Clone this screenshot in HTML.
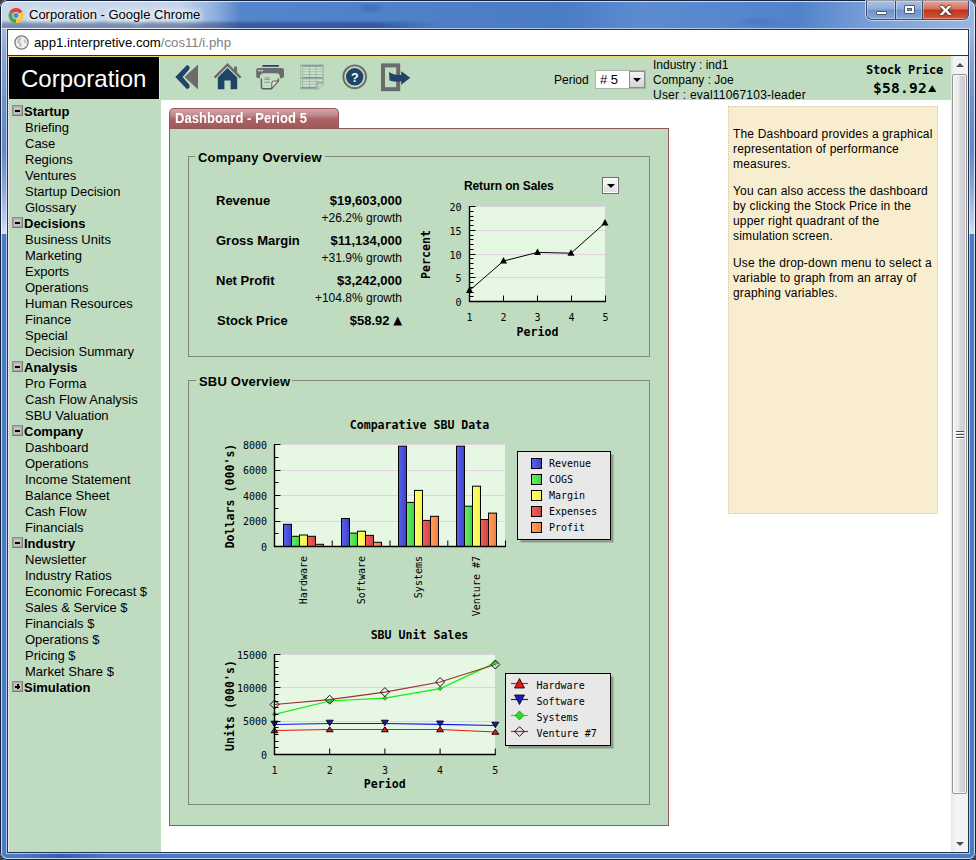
<!DOCTYPE html>
<html>
<head>
<meta charset="utf-8">
<title>Corporation</title>
<style>
html,body{margin:0;padding:0;}
body{width:976px;height:860px;overflow:hidden;position:relative;background:#3a3d42;font-family:"Liberation Sans",sans-serif;font-size:13px;color:#000;}
.abs{position:absolute;}
#frame{left:0;top:0;width:976px;height:860px;overflow:hidden;border-radius:7px;background:linear-gradient(to right,rgba(47,92,180,0) 20px,rgba(47,92,180,.9) 60px,rgba(47,92,180,0) 110px) 0 852px/976px 8px no-repeat,linear-gradient(to bottom,#a2b8de 30px,#86a3d4 60px,#6c90cc 105px,#6288c8 150px,#8caadb 190px,#c2d5f0 226px,#d2e1f6 234px,#4a7cc5 234px,#4a7cc5 100%);}
#titlebar{left:0;top:0;width:976px;height:29px;background:linear-gradient(to right,#c9d8ec 0px,#c4d4ea 180px,#8fb0de 215px,#5585cb 240px,#4f80c8 400px,#4a7bc5 560px,#5c8bd0 640px,#5283ca 800px,#7a9fd8 870px,#9ab6e2 976px);}
#titleshade{left:0;top:20px;width:440px;height:9px;background:linear-gradient(to bottom,rgba(10,30,90,0) 0,rgba(10,30,90,.38) 4px,rgba(10,30,90,.42) 8px,rgba(255,255,255,.3) 8px);-webkit-mask-image:linear-gradient(to right,#000 0,#000 85%,transparent 100%);mask-image:linear-gradient(to right,#000 0,#000 85%,transparent 100%);}
#titletext{left:29px;top:7px;font-size:13px;line-height:16px;color:#000;white-space:nowrap;text-shadow:0 0 6px #fff,0 0 6px #fff,0 0 10px #fff;}
#addr{left:8px;top:30px;width:960px;height:25px;background:#fff;border-bottom:1px solid #26344f;box-sizing:content-box;}
#addrtext{left:34px;top:35px;font-size:13.2px;line-height:16px;white-space:nowrap;color:#000;}
#addrtext span{color:#808080;}
#page{left:8px;top:56px;width:943px;height:796px;background:#fff;overflow:hidden;}
#vscroll{left:951px;top:56px;width:17px;height:796px;background:#f0f0f0;}

#ydot-top{left:8px;top:56px;width:943px;height:0;border-top:1px solid #ecd973;}
#ydot-left{left:8px;top:56px;width:0;height:796px;border-left:1px dotted #efd470;}
#logo{left:9px;top:57px;width:150px;height:42px;background:#000;color:#fff;font-size:24px;line-height:42px;white-space:nowrap;}
#logo span{position:absolute;left:12px;top:1px;}
#toolbar{left:159px;top:57px;width:791px;height:42px;background:#c0dcc0;border-left:1px solid #d9ead9;border-bottom:1px solid #ecd973;box-sizing:content-box;}
#sidebar{left:9px;top:99px;width:152px;height:753px;border-top:1px solid #ecd973;background:#c0dcc0;border-right:1px dotted #efd470;box-sizing:border-box;padding-top:4px;font-size:13px;line-height:16px;white-space:nowrap;}
.sh{font-weight:bold;padding-left:15px;position:relative;height:16px;}
.si{padding-left:16px;height:16px;}
.pm{position:absolute;left:3px;top:1px;width:11px;height:11px;box-sizing:border-box;border:1px solid #8e8e8e;border-right-color:#7a7a7a;border-bottom-color:#7a7a7a;background:#c2c2c2;box-shadow:inset 0 0 1px 1px #a4a4a4;}
.pm:before{content:"";position:absolute;left:2px;top:3.5px;width:5px;height:2px;background:#000;}
.pm.plus:after{content:"";position:absolute;left:3.5px;top:2px;width:2px;height:5px;background:#000;}

.tb12{font-size:12px;line-height:15px;white-space:nowrap;}
#psel{left:595px;top:70px;width:51px;height:19px;box-sizing:border-box;background:#fff;border:1px solid #a8b4a8;font-size:13px;line-height:17px;}
#psel span{position:absolute;left:4px;top:0;}
#psel i{position:absolute;right:0;top:0;width:16px;height:17px;background:linear-gradient(#f4f4f4,#d4d4d4);border:1px solid #8c8c8c;box-sizing:border-box;}
#psel i:after{content:"";position:absolute;left:3px;top:6px;border:4px solid transparent;border-top:4px solid #000;border-bottom:none;}
.mono{font-family:"DejaVu Sans Mono","Liberation Mono",monospace;white-space:nowrap;}
#sp1{left:866px;top:62.5px;font-weight:bold;font-size:12px;letter-spacing:-0.22px;line-height:15px;}
#sp2{left:873px;top:79.5px;font-weight:bold;font-size:14.5px;letter-spacing:0.27px;line-height:17px;}
#sp2 span{font-size:11px;letter-spacing:0;margin-left:1px;display:inline-block;transform:scaleY(.8);transform-origin:50% 78%;position:relative;top:-2px;font-family:"DejaVu Sans",sans-serif;}
/*MAINCSS*/
#tab{left:169px;top:108px;width:170px;height:21px;box-sizing:border-box;border:1px solid #9c5456;border-bottom:none;border-radius:5px 5px 0 0;background:linear-gradient(#d0a9aa 0%,#c08a8b 30%,#aa6466 50%,#a15658 100%);color:#fff;font-weight:bold;font-size:13px;line-height:19px;white-space:nowrap;}
#tab span{position:absolute;left:5px;top:-0.5px;letter-spacing:.06px;font-size:13px;transform:scaleY(1.06);transform-origin:50% 60%;}
#panel{left:169px;top:128px;width:500px;height:698px;box-sizing:border-box;border:1px solid #94585a;background:#c0dcc0;}
.fs{box-sizing:border-box;border:1px solid #7f857f;}
.lg{background:#c0dcc0;font-weight:bold;font-size:13px;line-height:16px;padding-left:3px;box-sizing:border-box;white-space:nowrap;letter-spacing:.2px;}
.kl{font-weight:bold;font-size:13px;line-height:16px;white-space:nowrap;}
.kv{font-weight:bold;font-size:13px;line-height:16px;white-space:nowrap;right:574px;text-align:right;}
.kg{font-size:12px;line-height:15px;white-space:nowrap;right:574px;text-align:right;}
#rostitle{left:464px;top:179px;font-weight:bold;font-size:12px;line-height:15px;white-space:nowrap;letter-spacing:-.12px;}
#rosbtn{left:602px;top:177px;width:17px;height:17px;box-sizing:border-box;border:1px solid #6e6e6e;background:linear-gradient(#fbfbfb,#dcdcdc);box-shadow:inset 0 0 0 1px #fff;}
#rosbtn:after{content:"";position:absolute;left:4px;top:6px;border:4px solid transparent;border-top:4px solid #000;border-bottom:none;}
/*ENDMAINCSS*/
#help{left:728px;top:106px;width:210px;height:408px;box-sizing:border-box;border:1px dotted #eec95a;background:#f8edcf;font-size:12px;line-height:15px;padding:8px 0 0 4px;letter-spacing:.18px;white-space:nowrap;}
#help p{margin:12px 0 12px 0;}
#vscroll{background:linear-gradient(to right,#e6e6e6,#f4f4f4 4px,#f2f2f2);}
#sb-up,#sb-down{left:951px;width:17px;height:17px;}
#sb-up{top:57px;}#sb-down{top:835px;}
#sb-up i,#sb-down i{position:absolute;left:5px;width:0;height:0;border:4px solid transparent;}
#sb-up i{top:2px;border-bottom:4px solid #505050;border-top:none;top:6px;}
#sb-down i{top:7px;border-top:4px solid #505050;border-bottom:none;}
#sb-thumb{left:952px;top:74px;width:15px;height:720px;box-sizing:border-box;border:1px solid #979797;border-radius:2px;background:linear-gradient(to right,#f4f4f4 0,#e9e9ea 45%,#d6d6da 55%,#cbcbd0 100%);box-shadow:inset 0 0 0 1px rgba(255,255,255,.7);}
#sb-thumb i{position:absolute;left:3px;top:356px;width:8px;height:1px;background:#4a4a4a;box-shadow:0 1px 0 #fff,0 3px 0 #4a4a4a,0 4px 0 #fff,0 6px 0 #4a4a4a,0 7px 0 #fff;}
#wbtns{left:866px;top:1px;width:103px;height:19px;border:1px solid #3c4c6c;border-top:none;border-radius:0 0 6px 6px;box-sizing:border-box;box-shadow:0 0 0 1px rgba(255,255,255,.55);overflow:hidden;}
.wb{top:0;height:18px;background:linear-gradient(#a9c0e2 0,#8eabd8 45%,#6e92cb 50%,#86a6d8 100%);border-right:1px solid #3c4c6c;box-sizing:border-box;box-shadow:inset 0 0 0 1px rgba(255,255,255,.35);}
.wb i{position:absolute;}
#wclose{background:linear-gradient(#e8a394 0,#d5705c 45%,#c0341c 50%,#cf5a3c 100%);border-right:none;color:#fff;font-weight:bold;text-align:center;font-size:17px;line-height:15px;text-shadow:0 0 1px #3a2020,0 0 1px #3a2020,0 0 2px #3a2020;}
#wclose span{position:relative;top:1px;left:-0.5px;display:inline-block;transform:scaleX(1.35);}
#ring{left:0;top:0;width:976px;height:860px;border-radius:7px;box-shadow:inset 0 0 0 1px #16213a,inset 0 0 0 2px rgba(255,255,255,.72);pointer-events:none;}
#inner{left:8px;top:30px;width:960px;height:822px;box-shadow:0 0 0 1px #26344f,0 0 0 2px rgba(255,255,255,.55);}
#titleblob1{left:355px;top:2px;width:30px;height:12px;background:radial-gradient(ellipse at center,rgba(20,50,120,.25),rgba(20,50,120,0) 70%);}
#titleblob2{left:730px;top:16px;width:60px;height:12px;background:radial-gradient(ellipse at center,rgba(20,50,140,.16),rgba(20,50,140,0) 70%);}
</style>
</head>
<body>
<div id="frame" class="abs">
<div id="titlebar" class="abs"></div>
<div id="titleshade" class="abs"></div>
<div id="titleblob1" class="abs"></div><div id="titleblob2" class="abs"></div>
<div id="titletext" class="abs">Corporation - Google Chrome</div>
<div id="inner" class="abs"></div>
<div id="addr" class="abs"></div>
<div id="addrtext" class="abs">app1.interpretive.com<span>/cos11/i.php</span></div>
<div id="page" class="abs">

</div>

<div class="abs" id="ydot-top"></div>
<div class="abs" id="ydot-left"></div>
<div class="abs" id="logo"><span>Corporation</span></div>
<div class="abs" id="toolbar"></div>
<div class="abs" id="sidebar">
<div class="sh"><i class="pm"></i>Startup</div>
<div class="si">Briefing</div>
<div class="si">Case</div>
<div class="si">Regions</div>
<div class="si">Ventures</div>
<div class="si">Startup Decision</div>
<div class="si">Glossary</div>
<div class="sh"><i class="pm"></i>Decisions</div>
<div class="si">Business Units</div>
<div class="si">Marketing</div>
<div class="si">Exports</div>
<div class="si">Operations</div>
<div class="si">Human Resources</div>
<div class="si">Finance</div>
<div class="si">Special</div>
<div class="si">Decision Summary</div>
<div class="sh"><i class="pm"></i>Analysis</div>
<div class="si">Pro Forma</div>
<div class="si">Cash Flow Analysis</div>
<div class="si">SBU Valuation</div>
<div class="sh"><i class="pm"></i>Company</div>
<div class="si">Dashboard</div>
<div class="si">Operations</div>
<div class="si">Income Statement</div>
<div class="si">Balance Sheet</div>
<div class="si">Cash Flow</div>
<div class="si">Financials</div>
<div class="sh"><i class="pm"></i>Industry</div>
<div class="si">Newsletter</div>
<div class="si">Industry Ratios</div>
<div class="si">Economic Forecast $</div>
<div class="si">Sales &amp; Service $</div>
<div class="si">Financials $</div>
<div class="si">Operations $</div>
<div class="si">Pricing $</div>
<div class="si">Market Share $</div>
<div class="sh"><i class="pm plus"></i>Simulation</div>
</div>

<svg class="abs" id="icons" style="left:165px;top:57px" width="255" height="42" viewBox="165 57 255 42">
 <!-- back -->
 <polygon points="198,64.5 198,89.5 184.5,77" fill="#6b6b6b"/>
 <polygon points="187,65 189.5,66.5 189.5,69 182.6,77 189.5,85 189.5,87.8 187,89.3 175.3,77" fill="#1f4468"/>
 <!-- home -->
 <polygon points="227.5,68 237.2,77.4 237.2,89.2 230.6,89.2 230.6,80.6 224.4,80.6 224.4,89.2 217.8,89.2 217.8,77.4" fill="#1f4468"/>
 <polyline points="214.6,77.6 227.5,64.6 240.6,77.6" fill="none" stroke="#6b6b6b" stroke-width="2.4" stroke-linejoin="miter"/>
 <rect x="234" y="66.6" width="3" height="6" fill="#6b6b6b"/>
 <!-- print -->
 <rect x="262.200" y="65.100" width="16.800" height="1.700" rx="0.800" fill="#1f4468"/>
 <path d="M258.600,67.900 h23 a2.400,2.400 0 0 1 2.400,2.400 v5.600 a2.400,2.400 0 0 1 -2.400,2.400 h-23 a2.400,2.400 0 0 1 -2.400,-2.400 v-5.600 a2.400,2.400 0 0 1 2.400,-2.400 z" fill="#6b6b6b"/>
 <rect x="258.400" y="69.900" width="1.700" height="1.500" fill="#dfe9df"/><rect x="261.100" y="69.900" width="1.700" height="1.500" fill="#dfe9df"/>
 <path d="M263.400,74.700 h13 a2,2 0 0 1 2,2 v4.300 l-7,7.700 h-8 a2,2 0 0 1 -2,-2 v-10 a2,2 0 0 1 2,-2 z" fill="#c8ddc8" stroke="#c0dcc0" stroke-width="3"/>
 <path d="M263.400,74.700 h13 a2,2 0 0 1 2,2 v4.300 l-7,7.700 h-8 a2,2 0 0 1 -2,-2 v-10 a2,2 0 0 1 2,-2 z" fill="#c8ddc8" stroke="none"/>
 <path d="M261.400,78.500 v8.200 a2,2 0 0 0 2,2 h8 l7,-7.700 v-2.500" fill="none" stroke="#5c5c5c" stroke-width="1.400"/>
 <path d="M278.400,81 h-4.600 a2,2 0 0 0 -2,2 v5.300 z" fill="#dbe8db" stroke="#5c5c5c" stroke-width="1"/>
 <path d="M264.400,77.800 h5.600 M264.400,79.400 h5.600 M264.400,82.200 h5.600" stroke="#7f8f84" stroke-width="0.900"/>
 <!-- sheet (disabled) -->
 <path d="M300.200,64.200 h23.600 v19.400 l-6,6 h-17.600 z" fill="#a2b8a7"/>
 <g fill="#cfe3d0"><rect x="301" y="66.9" width="1.3" height="1.700"/><rect x="303.2" y="66.9" width="5.8" height="1.700"/><rect x="310" y="66.9" width="5.6" height="1.700"/><rect x="316.6" y="66.9" width="5.8" height="1.700"/><rect x="301" y="69.6" width="1.3" height="1.700"/><rect x="303.2" y="69.6" width="5.8" height="1.700"/><rect x="310" y="69.6" width="5.6" height="1.700"/><rect x="316.6" y="69.6" width="5.8" height="1.700"/><rect x="301" y="72.3" width="1.3" height="1.700"/><rect x="303.2" y="72.3" width="5.8" height="1.700"/><rect x="310" y="72.3" width="5.6" height="1.700"/><rect x="316.6" y="72.3" width="5.8" height="1.700"/><rect x="301" y="75" width="1.3" height="1.700"/><rect x="303.2" y="75" width="5.8" height="1.700"/><rect x="310" y="75" width="5.6" height="1.700"/><rect x="316.6" y="75" width="5.8" height="1.700"/><rect x="301" y="79.4" width="1.3" height="1.700"/><rect x="303.2" y="79.4" width="5.8" height="1.700"/><rect x="310" y="79.4" width="5.6" height="1.700"/><rect x="316.6" y="79.4" width="5.8" height="1.700"/><rect x="301" y="82.1" width="1.3" height="1.700"/><rect x="303.2" y="82.1" width="5.8" height="1.700"/><rect x="310" y="82.1" width="5.6" height="1.700"/><rect x="301" y="84.8" width="1.3" height="1.700"/><rect x="303.2" y="84.8" width="5.8" height="1.700"/><rect x="310" y="84.8" width="5.6" height="1.700"/></g>
 <path d="M303,66 h19.400 M303,77.700 h19.400 M301,87.800 h14.600" stroke="#7d9aa2" stroke-width="1.400"/>
 <path d="M323.800,83.600 h-6 v6 z" fill="#cadcca" stroke="#9db1a2" stroke-width="0.800"/>
 <!-- help -->
 <circle cx="354.700" cy="76.800" r="11.400" fill="none" stroke="#6b6b6b" stroke-width="1.900"/>
 <circle cx="354.700" cy="76.800" r="8.700" fill="#1f4468"/>
 <text x="354.900" y="82" text-anchor="middle" font-family="Liberation Sans, sans-serif" font-weight="bold" font-size="12.500" fill="#fff">?</text>
 <!-- exit -->
 <rect x="383" y="65.400" width="15.200" height="23.800" fill="none" stroke="#6b6b6b" stroke-width="4"/>
 <path d="M389,72.100 Q393.500,75.300 401.200,75 L401.200,71.200 L410.300,77.800 L401.200,84.700 L401.200,81.300 Q394,82.300 389.500,80.600 Z" fill="#1f4468"/>
</svg>
<div class="abs tb12" style="left:554px;top:73px">Period</div>
<div class="abs" id="psel"><span># 5</span><i></i></div>
<div class="abs tb12" style="left:653px;top:58px;line-height:15px">Industry : ind1<br>Company : Joe<br><span style="letter-spacing:.22px">User : eval11067103-leader</span></div>
<div class="abs mono" id="sp1">Stock Price</div>
<div class="abs mono" id="sp2">$58.92<span>&#9650;</span></div>

<!--MAINSTART-->
<div class="abs" id="tab"><span>Dashboard - Period 5</span></div>
<div class="abs" id="panel"></div>
<div class="abs fs" style="left:188px;top:156px;width:462px;height:201px"></div>
<div class="abs lg" style="left:195px;top:150px;width:130px">Company Overview</div>
<div class="abs fs" style="left:188px;top:380px;width:462px;height:425px"></div>
<div class="abs lg" style="left:196px;top:374px;width:96px">SBU Overview</div>
<div class="abs kl" style="left:216px;top:193px">Revenue</div><div class="abs kv" style="top:193px">$19,603,000</div><div class="abs kg" style="top:211px">+26.2% growth</div>
<div class="abs kl" style="left:216px;top:233px">Gross Margin</div><div class="abs kv" style="top:233px">$11,134,000</div><div class="abs kg" style="top:251px">+31.9% growth</div>
<div class="abs kl" style="left:216px;top:273px">Net Profit</div><div class="abs kv" style="top:273px">$3,242,000</div><div class="abs kg" style="top:291px">+104.8% growth</div>
<div class="abs kl" style="left:217px;top:313px">Stock Price</div><div class="abs kv" style="top:313px">$58.92 <span style="font-size:11.5px;font-weight:normal;font-family:'DejaVu Sans',sans-serif;line-height:10px;position:relative;top:-1px">&#9650;</span></div>
<div class="abs" id="rostitle">Return on Sales</div>
<div class="abs" id="rosbtn"></div>
<svg class="abs" id="charts" style="left:169px;top:128px" width="500" height="698" viewBox="169 128 500 698" font-family="DejaVu Sans Mono, Liberation Mono, monospace" fill="#000">
<defs>
<linearGradient id="gB" x1="0" x2="1" y1="0" y2="0"><stop offset="0" stop-color="#5a62ea"/><stop offset="1" stop-color="#3c42cc"/></linearGradient>
<linearGradient id="gG" x1="0" x2="1" y1="0" y2="0"><stop offset="0" stop-color="#66f066"/><stop offset="1" stop-color="#3fd23f"/></linearGradient>
<linearGradient id="gY" x1="0" x2="1" y1="0" y2="0"><stop offset="0" stop-color="#ffff78"/><stop offset="1" stop-color="#f4f444"/></linearGradient>
<linearGradient id="gR" x1="0" x2="1" y1="0" y2="0"><stop offset="0" stop-color="#f06060"/><stop offset="1" stop-color="#d84040"/></linearGradient>
<linearGradient id="gO" x1="0" x2="1" y1="0" y2="0"><stop offset="0" stop-color="#ffa060"/><stop offset="1" stop-color="#f47c3c"/></linearGradient>
</defs>
<rect x="469" y="206" width="136" height="95" fill="#e6f7e4"/>
<line x1="469" x2="605" y1="277.5" y2="277.5" stroke="#ddd3dd" stroke-width="1"/>
<line x1="469" x2="605" y1="254.5" y2="254.5" stroke="#ddd3dd" stroke-width="1"/>
<line x1="469" x2="605" y1="230.5" y2="230.5" stroke="#ddd3dd" stroke-width="1"/>
<line x1="469" x2="605" y1="206.5" y2="206.5" stroke="#ddd3dd" stroke-width="1"/>
<path d="M469.5,206 V302 M469,301.5 H606" stroke="#000" stroke-width="1.4" fill="none"/>
<path d="M469,301.5 h6.5 M469,296.5 h4.5 M469,292.5 h4.5 M469,287.5 h4.5 M469,282.5 h4.5 M469,277.5 h6.5 M469,273.5 h4.5 M469,268.5 h4.5 M469,263.5 h4.5 M469,258.5 h4.5 M469,254.5 h6.5 M469,249.5 h4.5 M469,244.5 h4.5 M469,239.5 h4.5 M469,235.5 h4.5 M469,230.5 h6.5 M469,225.5 h4.5 M469,220.5 h4.5 M469,216.5 h4.5 M469,211.5 h4.5 M469,206.5 h6.5 M503.5,301 v-5.5 M537.5,301 v-5.5 M571.5,301 v-5.5 M605.5,301 v-5.5" stroke="#000" stroke-width="1" fill="none"/>
<text x="461.5" y="306.0" text-anchor="end" font-size="10">0</text>
<text x="461.5" y="282.2" text-anchor="end" font-size="10">5</text>
<text x="461.5" y="258.5" text-anchor="end" font-size="10">10</text>
<text x="461.5" y="234.8" text-anchor="end" font-size="10">15</text>
<text x="461.5" y="211.0" text-anchor="end" font-size="10">20</text>
<text x="469.5" y="321" text-anchor="middle" font-size="10">1</text>
<text x="503.5" y="321" text-anchor="middle" font-size="10">2</text>
<text x="537.5" y="321" text-anchor="middle" font-size="10">3</text>
<text x="571.5" y="321" text-anchor="middle" font-size="10">4</text>
<text x="605.5" y="321" text-anchor="middle" font-size="10">5</text>
<text x="537.5" y="336" text-anchor="middle" font-size="11.6" font-weight="bold">Period</text>
<text x="430" y="254.5" text-anchor="middle" font-size="11.6" font-weight="bold" transform="rotate(-90 430 254.5)">Percent</text>
<polyline points="469.5,290.5 503.5,261 537.5,252.4 571,253.2 605,223" fill="none" stroke="#000" stroke-width="1"/>
<polygon points="466.0,293.0 473.0,293.0 469.5,286.5" fill="#000"/>
<polygon points="500.0,263.5 507.0,263.5 503.5,257" fill="#000"/>
<polygon points="534.0,254.9 541.0,254.9 537.5,248.4" fill="#000"/>
<polygon points="567.5,255.7 574.5,255.7 571,249.2" fill="#000"/>
<polygon points="601.5,225.5 608.5,225.5 605,219" fill="#000"/>
<text x="419.5" y="429" text-anchor="middle" font-size="11.6" font-weight="bold">Comparative SBU Data</text>
<rect x="274" y="444" width="231" height="102" fill="#e6f7e4"/>
<line x1="274" x2="505" y1="521.5" y2="521.5" stroke="#ddd3dd" stroke-width="1"/>
<line x1="274" x2="505" y1="495.5" y2="495.5" stroke="#ddd3dd" stroke-width="1"/>
<line x1="274" x2="505" y1="470.5" y2="470.5" stroke="#ddd3dd" stroke-width="1"/>
<line x1="274" x2="505" y1="444.5" y2="444.5" stroke="#ddd3dd" stroke-width="1"/>
<rect x="283.5" y="524.3" width="8" height="22.2" fill="url(#gB)" stroke="#000" stroke-width="1"/>
<rect x="291.5" y="536.3" width="8" height="10.2" fill="url(#gG)" stroke="#000" stroke-width="1"/>
<rect x="299.5" y="535.0" width="8" height="11.5" fill="url(#gY)" stroke="#000" stroke-width="1"/>
<rect x="307.5" y="536.3" width="8" height="10.2" fill="url(#gR)" stroke="#000" stroke-width="1"/>
<rect x="315.5" y="544.3" width="8" height="2.2" fill="url(#gO)" stroke="#000" stroke-width="1"/>
<rect x="341.5" y="518.5" width="8" height="28.1" fill="url(#gB)" stroke="#000" stroke-width="1"/>
<rect x="349.5" y="533.1" width="8" height="13.4" fill="url(#gG)" stroke="#000" stroke-width="1"/>
<rect x="357.5" y="531.2" width="8" height="15.3" fill="url(#gY)" stroke="#000" stroke-width="1"/>
<rect x="365.5" y="535.4" width="8" height="11.1" fill="url(#gR)" stroke="#000" stroke-width="1"/>
<rect x="373.5" y="542.3" width="8" height="4.2" fill="url(#gO)" stroke="#000" stroke-width="1"/>
<rect x="398.5" y="446.2" width="8" height="100.3" fill="url(#gB)" stroke="#000" stroke-width="1"/>
<rect x="406.5" y="502.4" width="8" height="44.1" fill="url(#gG)" stroke="#000" stroke-width="1"/>
<rect x="414.5" y="490.4" width="8" height="56.1" fill="url(#gY)" stroke="#000" stroke-width="1"/>
<rect x="422.5" y="520.4" width="8" height="26.1" fill="url(#gR)" stroke="#000" stroke-width="1"/>
<rect x="430.5" y="516.3" width="8" height="30.2" fill="url(#gO)" stroke="#000" stroke-width="1"/>
<rect x="456.5" y="446.2" width="8" height="100.3" fill="url(#gB)" stroke="#000" stroke-width="1"/>
<rect x="464.5" y="506.2" width="8" height="40.3" fill="url(#gG)" stroke="#000" stroke-width="1"/>
<rect x="472.5" y="486.2" width="8" height="60.3" fill="url(#gY)" stroke="#000" stroke-width="1"/>
<rect x="480.5" y="519.5" width="8" height="27.0" fill="url(#gR)" stroke="#000" stroke-width="1"/>
<rect x="488.5" y="513.1" width="8" height="33.4" fill="url(#gO)" stroke="#000" stroke-width="1"/>
<path d="M274.5,444 V547 M274,546.5 H506" stroke="#000" stroke-width="1.4" fill="none"/>
<path d="M274,546.5 h6.5 M274,533.5 h4.5 M274,521.5 h6.5 M274,508.5 h4.5 M274,495.5 h6.5 M274,482.5 h4.5 M274,470.5 h6.5 M274,457.5 h4.5 M274,444.5 h6.5 M332.2,546 v-5.5 M390.0,546 v-5.5 M447.8,546 v-5.5 M505.5,546 v-5.5" stroke="#000" stroke-width="1" fill="none"/>
<text x="267" y="550.5" text-anchor="end" font-size="10">0</text>
<text x="267" y="525.0" text-anchor="end" font-size="10">2000</text>
<text x="267" y="499.5" text-anchor="end" font-size="10">4000</text>
<text x="267" y="474.0" text-anchor="end" font-size="10">6000</text>
<text x="267" y="448.5" text-anchor="end" font-size="10">8000</text>
<text x="234" y="496" text-anchor="middle" font-size="11.6" font-weight="bold" transform="rotate(-90 234 496)">Dollars (000's)</text>
<text x="307" y="556" text-anchor="end" font-size="10" transform="rotate(-90 307 556)">Hardware</text>
<text x="364.5" y="556" text-anchor="end" font-size="10" transform="rotate(-90 364.5 556)">Software</text>
<text x="422" y="556" text-anchor="end" font-size="10" transform="rotate(-90 422 556)">Systems</text>
<text x="480" y="556" text-anchor="end" font-size="10" transform="rotate(-90 480 556)">Venture #7</text>
<rect x="520.5" y="454.5" width="93" height="88" fill="#8e9c8e"/>
<rect x="517.5" y="451.5" width="93" height="88" fill="#e8e8e8" stroke="#000" stroke-width="1"/>
<rect x="531.5" y="458.5" width="10" height="10" fill="url(#gB)" stroke="#000" stroke-width="1"/>
<text x="549" y="467" text-anchor="start" font-size="10">Revenue</text>
<rect x="531.5" y="474.5" width="10" height="10" fill="url(#gG)" stroke="#000" stroke-width="1"/>
<text x="549" y="483" text-anchor="start" font-size="10">COGS</text>
<rect x="531.5" y="490.5" width="10" height="10" fill="url(#gY)" stroke="#000" stroke-width="1"/>
<text x="549" y="499" text-anchor="start" font-size="10">Margin</text>
<rect x="531.5" y="506.5" width="10" height="10" fill="url(#gR)" stroke="#000" stroke-width="1"/>
<text x="549" y="515" text-anchor="start" font-size="10">Expenses</text>
<rect x="531.5" y="522.5" width="10" height="10" fill="url(#gO)" stroke="#000" stroke-width="1"/>
<text x="549" y="531" text-anchor="start" font-size="10">Profit</text>
<text x="419.5" y="639" text-anchor="middle" font-size="11.6" font-weight="bold">SBU Unit Sales</text>
<rect x="274" y="654" width="221" height="100" fill="#e6f7e4"/>
<line x1="274" x2="495" y1="721.5" y2="721.5" stroke="#ddd3dd" stroke-width="1"/>
<line x1="274" x2="495" y1="687.5" y2="687.5" stroke="#ddd3dd" stroke-width="1"/>
<line x1="274" x2="495" y1="654.5" y2="654.5" stroke="#ddd3dd" stroke-width="1"/>
<polyline points="274.5,730.5 329.7,729.5 384.9,729.5 440.1,729.5 495.3,732" fill="none" stroke="#f01010" stroke-width="1.2"/>
<polyline points="274.5,724.5 329.7,723.5 384.9,723.5 440.1,724.3 495.3,725.5" fill="none" stroke="#1010f0" stroke-width="1.2"/>
<polyline points="274.5,714.3 329.7,701 384.9,698.1 440.1,688.6 495.3,662.9" fill="none" stroke="#10ee10" stroke-width="1.2"/>
<polyline points="274.5,704.5 329.7,699.7 384.9,692.1 440.1,682 495.3,664.5" fill="none" stroke="#a03030" stroke-width="1.2"/>
<polygon points="271.0,732.8 278.0,732.8 274.5,727.8" fill="#e01818" stroke="#000" stroke-width="0.9"/>
<polygon points="326.2,731.8 333.2,731.8 329.7,726.8" fill="#e01818" stroke="#000" stroke-width="0.9"/>
<polygon points="381.4,731.8 388.4,731.8 384.9,726.8" fill="#e01818" stroke="#000" stroke-width="0.9"/>
<polygon points="436.6,731.8 443.6,731.8 440.1,726.8" fill="#e01818" stroke="#000" stroke-width="0.9"/>
<polygon points="491.8,734.3 498.8,734.3 495.3,729.3" fill="#e01818" stroke="#000" stroke-width="0.9"/>
<polygon points="271.0,721.2 278.0,721.2 274.5,726.7" fill="#1818c8" stroke="#000" stroke-width="0.9"/>
<polygon points="326.2,720.2 333.2,720.2 329.7,725.7" fill="#1818c8" stroke="#000" stroke-width="0.9"/>
<polygon points="381.4,720.2 388.4,720.2 384.9,725.7" fill="#1818c8" stroke="#000" stroke-width="0.9"/>
<polygon points="436.6,721.0 443.6,721.0 440.1,726.5" fill="#1818c8" stroke="#000" stroke-width="0.9"/>
<polygon points="491.8,722.2 498.8,722.2 495.3,727.7" fill="#1818c8" stroke="#000" stroke-width="0.9"/>
<polygon points="272.3,714.3 274.5,712.0999999999999 276.7,714.3 274.5,716.5" fill="#20e020" stroke="#1a6a1a" stroke-width="0.6"/>
<polygon points="327.5,701 329.7,698.8 331.9,701 329.7,703.2" fill="#20e020" stroke="#1a6a1a" stroke-width="0.6"/>
<polygon points="382.7,698.1 384.9,695.9 387.09999999999997,698.1 384.9,700.3000000000001" fill="#20e020" stroke="#1a6a1a" stroke-width="0.6"/>
<polygon points="437.90000000000003,688.6 440.1,686.4 442.3,688.6 440.1,690.8000000000001" fill="#20e020" stroke="#1a6a1a" stroke-width="0.6"/>
<polygon points="493.1,662.9 495.3,660.6999999999999 497.5,662.9 495.3,665.1" fill="#20e020" stroke="#1a6a1a" stroke-width="0.6"/>
<polygon points="270.0,704.5 274.5,700.0 279.0,704.5 274.5,709.0" fill="none" stroke="#000" stroke-width="0.9"/>
<polygon points="325.2,699.7 329.7,695.2 334.2,699.7 329.7,704.2" fill="none" stroke="#000" stroke-width="0.9"/>
<polygon points="380.4,692.1 384.9,687.6 389.4,692.1 384.9,696.6" fill="none" stroke="#000" stroke-width="0.9"/>
<polygon points="435.6,682 440.1,677.5 444.6,682 440.1,686.5" fill="none" stroke="#000" stroke-width="0.9"/>
<polygon points="490.8,664.5 495.3,660.0 499.8,664.5 495.3,669.0" fill="none" stroke="#000" stroke-width="0.9"/>
<path d="M274.5,654 V755 M274,754.5 H496" stroke="#000" stroke-width="1.4" fill="none"/>
<path d="M274,754.5 h6.5 M274,747.5 h4.5 M274,741.5 h4.5 M274,734.5 h4.5 M274,727.5 h4.5 M274,721.5 h6.5 M274,714.5 h4.5 M274,707.5 h4.5 M274,701.5 h4.5 M274,694.5 h4.5 M274,687.5 h6.5 M274,681.5 h4.5 M274,674.5 h4.5 M274,667.5 h4.5 M274,661.5 h4.5 M274,654.5 h6.5 M329.7,754 v-5.5 M384.9,754 v-5.5 M440.1,754 v-5.5 M495.3,754 v-5.5" stroke="#000" stroke-width="1" fill="none"/>
<text x="267" y="758.5" text-anchor="end" font-size="10">0</text>
<text x="267" y="725.2" text-anchor="end" font-size="10">5000</text>
<text x="267" y="691.8" text-anchor="end" font-size="10">10000</text>
<text x="267" y="658.5" text-anchor="end" font-size="10">15000</text>
<text x="274.5" y="774" text-anchor="middle" font-size="10">1</text>
<text x="329.7" y="774" text-anchor="middle" font-size="10">2</text>
<text x="384.9" y="774" text-anchor="middle" font-size="10">3</text>
<text x="440.1" y="774" text-anchor="middle" font-size="10">4</text>
<text x="495.3" y="774" text-anchor="middle" font-size="10">5</text>
<text x="384.7" y="788" text-anchor="middle" font-size="11.6" font-weight="bold">Period</text>
<text x="234" y="705.5" text-anchor="middle" font-size="11.6" font-weight="bold" transform="rotate(-90 234 705.5)">Units (000's)</text>
<rect x="508.5" y="676.5" width="105" height="72" fill="#8e9c8e"/>
<rect x="505.500" y="673.5" width="105" height="72" fill="#e8e8e8" stroke="#000" stroke-width="1"/>
<line x1="511" x2="528" y1="683.5" y2="683.5" stroke="#f01010" stroke-width="1.2"/>
<polygon points="514.5,688.0 524.5,688.0 519.5,678.5" fill="#e01818" stroke="#000" stroke-width="0.8"/>
<text x="536.5" y="689.0" text-anchor="start" font-size="10">Hardware</text>
<line x1="511" x2="528" y1="699.5" y2="699.5" stroke="#1010f0" stroke-width="1.2"/>
<polygon points="514.5,695.0 524.5,695.0 519.5,704.5" fill="#1818c8" stroke="#000" stroke-width="0.8"/>
<text x="536.5" y="705.0" text-anchor="start" font-size="10">Software</text>
<line x1="511" x2="528" y1="715.5" y2="715.5" stroke="#10ee10" stroke-width="1.2"/>
<polygon points="515.0,715.5 519.5,711.0 524.0,715.5 519.5,720.0" fill="#20e020" stroke="#1a6a1a" stroke-width="0.6"/>
<text x="536.5" y="721.0" text-anchor="start" font-size="10">Systems</text>
<line x1="511" x2="528" y1="731.5" y2="731.5" stroke="#a03030" stroke-width="1.2"/>
<polygon points="514.7,731.5 519.5,726.7 524.3,731.5 519.5,736.3" fill="none" stroke="#000" stroke-width="0.9"/>
<text x="536.5" y="737.0" text-anchor="start" font-size="10">Venture #7</text>
</svg>
<!--MAINEND-->

<div class="abs" id="help">
<p>The Dashboard provides a graphical<br>representation of performance<br>measures.</p>
<p>You can also access the dashboard<br>by clicking the Stock Price in the<br>upper right quadrant of the<br>simulation screen.</p>
<p>Use the drop-down menu to select a<br>variable to graph from an array of<br>graphing variables.</p>
</div>

<div id="vscroll" class="abs"></div>

<div class="abs" id="sb-up"><i></i></div>
<div class="abs" id="sb-thumb"><i></i></div>
<div class="abs" id="sb-down"><i></i></div>
<svg class="abs" style="left:8px;top:6.5px" width="18" height="18" viewBox="0 0 18 18">
 <path d="M8,8.500 L1.59,4.80 A7.400,7.400 0 0 1 14.41,4.80 Z" fill="#e2412f"/>
 <path d="M8,8.500 L14.41,4.80 A7.400,7.400 0 0 1 8.00,15.90 Z" fill="#f5cb2b"/>
 <path d="M8,8.500 L8.00,15.90 A7.400,7.400 0 0 1 1.59,4.80 Z" fill="#48a846"/>
 <path d="M8,8.500 L14.41,4.80 L11.12,6.70 L4.88,6.70 Z" fill="#e2412f"/>
 <circle cx="8" cy="8.500" r="3.600" fill="#f4f4f4"/>
 <circle cx="8" cy="8.500" r="2.700" fill="#4787e8"/>
</svg>
<svg class="abs" style="left:13px;top:34px" width="17" height="17" viewBox="0 0 17 17">
 <circle cx="8.500" cy="8.500" r="6.600" fill="#f2f2f2" stroke="#7d7d7d" stroke-width="1.300"/>
 <path d="M5,4.500 q2,-1.500 3.500,-0.500 q0.500,1.500 -1,2.500 q-1,1.500 0.500,2.500 q1.500,1 0.500,3.500 q-1.500,1.500 -2,-0.500 q-0.500,-2 -2,-3 q-1,-2.500 0.500,-4.500 z M10.500,5.500 q2,-0.500 3,1.500 q0,2 -1.500,2.500 q-1.500,-0.500 -1.500,-4 z" fill="#c4c4c4"/>
</svg>
<div class="abs" id="ring"></div>
<div class="abs" id="wbtns">
 <div class="abs wb" style="left:0;width:29px;border-radius:0 0 0 5px"><i style="left:9px;top:10px;width:11px;height:4px;background:#fff;border:1px solid #4b5a70;box-sizing:border-box;border-radius:1px"></i></div>
 <div class="abs wb" style="left:29px;width:27px"><i style="left:8px;top:4px;width:11px;height:9px;border:1px solid #4b5a70;background:#fff;box-sizing:border-box;border-radius:1px"></i><i style="left:11px;top:7px;width:5px;height:3px;border:1px solid #4b5a70;background:#8aa6cf;box-sizing:border-box"></i></div>
 <div class="abs wb" id="wclose" style="left:56px;width:47px;border-radius:0 0 5px 0"><span>x</span></div>
</div>


</div>
</body>
</html>
